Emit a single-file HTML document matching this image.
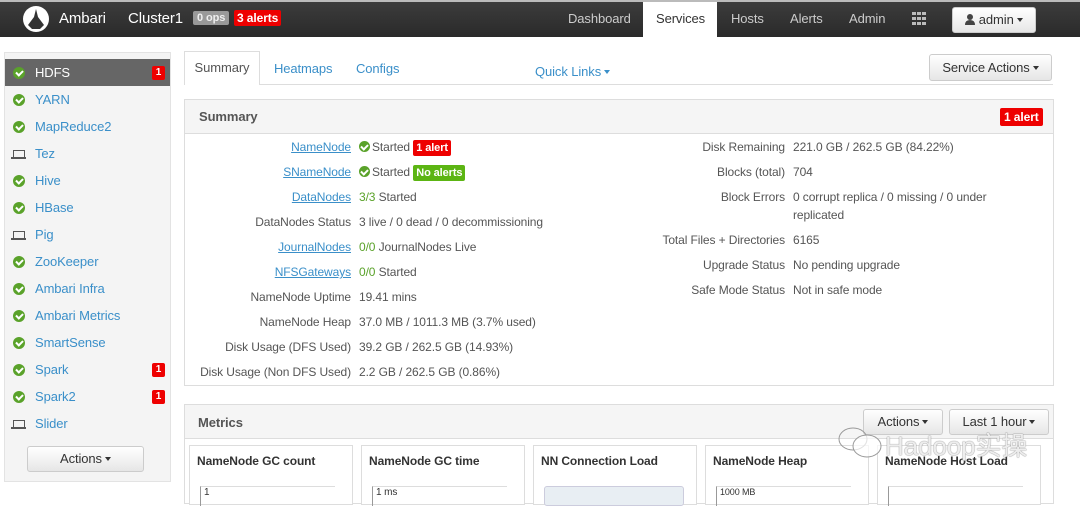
<!DOCTYPE html>
<html><head><meta charset="utf-8">
<style>
*{box-sizing:border-box;margin:0;padding:0}
body{width:1080px;height:494px;overflow:hidden;background:#fff;font-family:"Liberation Sans","Noto Sans CJK SC",sans-serif;font-size:12px;color:#555;position:relative;letter-spacing:-0.1px}
.a{position:absolute}
.nav{left:0;top:0;width:1080px;height:37px;background:linear-gradient(#3c3c3c,#2a2a2a);border-top:2px solid #bbb}
.nl{color:#ccc;font-size:13px;top:11px}
.badge{display:inline-block;color:#fff;font-weight:bold;font-size:11px;padding:1px 3px;border-radius:2px;line-height:14px}
.red{background:#e00}
.grn{background:#5cb513}
.side{left:4px;top:52px;width:167px;height:430px;background:#f4f4f4;border:1px solid #e3e3e3}
.si{position:absolute;left:0;width:165px;height:27px;font-size:13px;color:#3a8fc9;line-height:27px;padding-left:30px}
.si .ic{position:absolute;left:8px;top:8px;width:12px;height:12px;border-radius:50%;background:#5aa22a}
.si .ic:after{content:"";position:absolute;left:4px;top:2px;width:3px;height:5px;border:solid #fff;border-width:0 2px 2px 0;transform:rotate(45deg)}
.si .lp{position:absolute;left:8px;top:10px;width:12px;height:7px;border:1.5px solid #555;border-bottom:none}
.si .lp:after{content:"";position:absolute;left:-3px;top:6px;width:15px;height:1.5px;background:#555}
.si .bd{position:absolute;right:5px;top:7px;width:13px;height:14px;background:#e00;color:#fff;font-size:10px;font-weight:bold;line-height:14px;text-align:center;border-radius:2px;padding:0}
.btn{background:linear-gradient(#fff,#e6e6e6);border:1px solid #ccc;border-radius:3px;color:#333;font-size:13px;text-align:center}
.panel{border:1px solid #ddd}
.ph{background:#f5f5f5;border-bottom:1px solid #ddd}
.lab{position:absolute;text-align:right;color:#555;font-size:12px}
.val{position:absolute;color:#555;font-size:12px;white-space:nowrap}
.lk{color:#3a8fc9;text-decoration:underline}
.g{color:#5aa22a}
.chk{display:inline-block;width:11px;height:11px;border-radius:50%;background:#5aa22a;vertical-align:-1px;position:relative;margin-right:2px}
.chk:after{content:"";position:absolute;left:3px;top:2px;width:3px;height:5px;border:solid #fff;border-width:0 2px 2px 0;transform:rotate(45deg)}
.card{top:445px;height:60px;width:164px;border:1px solid #ddd;background:#fff}
.card b{position:absolute;left:7px;top:8px;font-size:12px;color:#333;font-weight:bold}
.car{display:inline-block;width:0;height:0;border-left:3.5px solid transparent;border-right:3.5px solid transparent;border-top:4px solid currentColor;vertical-align:2px;margin-left:3px}
</style></head><body>
<div class="a nav"></div>
<svg class="a" style="left:22px;top:5px" width="28" height="28" viewBox="0 0 28 28"><circle cx="14" cy="14" r="13" fill="#fff"/><path d="M14 4 L16 12 L22 20 L18 24 L10 24 L6 20 L12 12Z" fill="#333"/></svg>
<div class="a" style="left:59px;top:10px;color:#fff;font-size:15px">Ambari</div>
<div class="a" style="left:128px;top:10px;color:#fff;font-size:15px">Cluster1</div>
<div class="a" style="left:193px;top:11px;background:#999;color:#eee;font-size:11px;font-weight:bold;padding:1px 4px;border-radius:2px">0 ops</div>
<div class="a" style="left:234px;top:10px;background:#e00;color:#fff;font-size:12px;font-weight:bold;padding:1px 3px;border-radius:2px">3 alerts</div>
<div class="a nl" style="left:568px">Dashboard</div>
<div class="a" style="left:643px;top:2px;width:74px;height:35px;background:#fff"></div>
<div class="a nl" style="left:656px;color:#333">Services</div>
<div class="a nl" style="left:731px">Hosts</div>
<div class="a nl" style="left:790px">Alerts</div>
<div class="a nl" style="left:849px">Admin</div>
<svg class="a" style="left:912px;top:12px" width="15" height="13"><g fill="#bbb"><rect x="0" y="0" width="4" height="3"/><rect x="5" y="0" width="4" height="3"/><rect x="10" y="0" width="4" height="3"/><rect x="0" y="5" width="4" height="3"/><rect x="5" y="5" width="4" height="3"/><rect x="10" y="5" width="4" height="3"/><rect x="0" y="10" width="4" height="3"/><rect x="5" y="10" width="4" height="3"/><rect x="10" y="10" width="4" height="3"/></g></svg>
<div class="a btn" style="left:952px;top:7px;width:84px;height:26px;line-height:24px;font-size:13px"><svg width="10" height="11" style="vertical-align:-1px"><circle cx="5" cy="3" r="3" fill="#444"/><path d="M0 11 Q0 6 5 6 Q10 6 10 11Z" fill="#444"/></svg> admin<span class="car"></span></div>

<div class="a side">
<div class="si" style="top:6px;background:#666;color:#fff"><span class="ic"></span>HDFS<span class="bd">1</span></div>
<div class="si" style="top:33px"><span class="ic"></span>YARN</div>
<div class="si" style="top:60px"><span class="ic"></span>MapReduce2</div>
<div class="si" style="top:87px"><span class="lp"></span>Tez</div>
<div class="si" style="top:114px"><span class="ic"></span>Hive</div>
<div class="si" style="top:141px"><span class="ic"></span>HBase</div>
<div class="si" style="top:168px"><span class="lp"></span>Pig</div>
<div class="si" style="top:195px"><span class="ic"></span>ZooKeeper</div>
<div class="si" style="top:222px"><span class="ic"></span>Ambari Infra</div>
<div class="si" style="top:249px"><span class="ic"></span>Ambari Metrics</div>
<div class="si" style="top:276px"><span class="ic"></span>SmartSense</div>
<div class="si" style="top:303px"><span class="ic"></span>Spark<span class="bd">1</span></div>
<div class="si" style="top:330px"><span class="ic"></span>Spark2<span class="bd">1</span></div>
<div class="si" style="top:357px"><span class="lp"></span>Slider</div>
<div class="a btn" style="left:22px;top:393px;width:117px;height:26px;line-height:24px">Actions<span class="car"></span></div>
</div>

<div class="a" style="left:184px;top:84px;width:869px;height:1px;background:#ddd"></div>
<div class="a" style="left:184px;top:51px;width:76px;height:34px;background:#fff;border:1px solid #ddd;border-bottom:none;color:#555;font-size:13px;text-align:center;line-height:32px">Summary</div>
<div class="a" style="left:274px;top:61px;color:#3a8fc9;font-size:13px">Heatmaps</div>
<div class="a" style="left:356px;top:61px;color:#3a8fc9;font-size:13px">Configs</div>
<div class="a" style="left:535px;top:64px;color:#3a8fc9;font-size:13px">Quick Links<span class="car"></span></div>
<div class="a btn" style="left:929px;top:54px;width:123px;height:27px;line-height:25px">Service Actions<span class="car"></span></div>

<div class="a panel" style="left:184px;top:99px;width:870px;height:287px">
<div class="ph" style="height:34px"></div></div>
<div class="a" style="left:199px;top:109px;font-size:13px;font-weight:bold;color:#555">Summary</div>
<div class="a badge red" style="left:1000px;top:108px;font-size:12px;padding:2px 4px">1 alert</div>

<div class="lab" style="left:190px;width:161px;top:140px"><span class="lk">NameNode</span></div>
<div class="val" style="left:359px;top:140px"><span class="chk"></span>Started <span class="badge red">1 alert</span></div>
<div class="lab" style="left:190px;width:161px;top:165px"><span class="lk">SNameNode</span></div>
<div class="val" style="left:359px;top:165px"><span class="chk"></span>Started <span class="badge grn">No alerts</span></div>
<div class="lab" style="left:190px;width:161px;top:190px"><span class="lk">DataNodes</span></div>
<div class="val" style="left:359px;top:190px"><span class="g">3/3</span> Started</div>
<div class="lab" style="left:190px;width:161px;top:215px">DataNodes Status</div>
<div class="val" style="left:359px;top:215px">3 live / 0 dead / 0 decommissioning</div>
<div class="lab" style="left:190px;width:161px;top:240px"><span class="lk">JournalNodes</span></div>
<div class="val" style="left:359px;top:240px"><span class="g">0/0</span> JournalNodes Live</div>
<div class="lab" style="left:190px;width:161px;top:265px"><span class="lk">NFSGateways</span></div>
<div class="val" style="left:359px;top:265px"><span class="g">0/0</span> Started</div>
<div class="lab" style="left:190px;width:161px;top:290px">NameNode Uptime</div>
<div class="val" style="left:359px;top:290px">19.41 mins</div>
<div class="lab" style="left:190px;width:161px;top:315px">NameNode Heap</div>
<div class="val" style="left:359px;top:315px">37.0 MB / 1011.3 MB (3.7% used)</div>
<div class="lab" style="left:190px;width:161px;top:340px">Disk Usage (DFS Used)</div>
<div class="val" style="left:359px;top:340px">39.2 GB / 262.5 GB (14.93%)</div>
<div class="lab" style="left:190px;width:161px;top:365px">Disk Usage (Non DFS Used)</div>
<div class="val" style="left:359px;top:365px">2.2 GB / 262.5 GB (0.86%)</div>

<div class="lab" style="left:600px;width:185px;top:140px">Disk Remaining</div>
<div class="val" style="left:793px;top:140px">221.0 GB / 262.5 GB (84.22%)</div>
<div class="lab" style="left:600px;width:185px;top:165px">Blocks (total)</div>
<div class="val" style="left:793px;top:165px">704</div>
<div class="lab" style="left:600px;width:185px;top:190px">Block Errors</div>
<div class="val" style="left:793px;top:190px;line-height:18px;margin-top:-2px">0 corrupt replica / 0 missing / 0 under<br>replicated</div>
<div class="lab" style="left:600px;width:185px;top:233px">Total Files + Directories</div>
<div class="val" style="left:793px;top:233px">6165</div>
<div class="lab" style="left:600px;width:185px;top:258px">Upgrade Status</div>
<div class="val" style="left:793px;top:258px">No pending upgrade</div>
<div class="lab" style="left:600px;width:185px;top:283px">Safe Mode Status</div>
<div class="val" style="left:793px;top:283px">Not in safe mode</div>

<div class="a panel" style="left:184px;top:404px;width:870px;height:100px">
<div class="ph" style="height:34px"></div></div>
<div class="a" style="left:198px;top:415px;font-size:13px;font-weight:bold;color:#555">Metrics</div>
<div class="a btn" style="left:863px;top:409px;width:80px;height:26px;line-height:24px">Actions<span class="car"></span></div>
<div class="a btn" style="left:949px;top:409px;width:100px;height:26px;line-height:24px">Last 1 hour<span class="car"></span></div>

<div class="a card" style="left:189px"><b>NameNode GC count</b><div class="a" style="left:10px;top:40px;width:135px;height:20px;border-left:1px solid #999;border-top:1px solid #ddd;font-size:10px;color:#333;padding-left:3px">1</div></div>
<div class="a card" style="left:361px"><b>NameNode GC time</b><div class="a" style="left:10px;top:40px;width:135px;height:20px;border-left:1px solid #999;border-top:1px solid #ddd;font-size:10px;color:#333;padding-left:3px">1 ms</div></div>
<div class="a card" style="left:533px"><b>NN Connection Load</b><div class="a" style="left:10px;top:40px;width:140px;height:20px;background:#e8eef3;border:1px solid #ccd;border-radius:3px"></div></div>
<div class="a card" style="left:705px"><b>NameNode Heap</b><div class="a" style="left:10px;top:40px;width:135px;height:20px;border-left:1px solid #999;border-top:1px solid #ddd;font-size:9px;color:#333;padding-left:3px">1000 MB</div></div>
<div class="a card" style="left:877px"><b>NameNode Host Load</b><div class="a" style="left:10px;top:40px;width:135px;height:20px;border-left:1px solid #999;border-top:1px solid #ddd"></div></div>
<div class="a" style="left:885px;top:426px;font-size:26px;color:rgba(255,255,255,.85);text-shadow:0 0 1px #888,0 0 1px #888;font-family:'Liberation Sans','Noto Sans CJK SC',sans-serif">Hadoop实操</div>
<svg class="a" style="left:835px;top:425px" width="50" height="36"><ellipse cx="18" cy="14" rx="14" ry="11" fill="none" stroke="#999"/><ellipse cx="32" cy="21" rx="14" ry="11" fill="rgba(255,255,255,.7)" stroke="#999"/></svg>
</body></html>
